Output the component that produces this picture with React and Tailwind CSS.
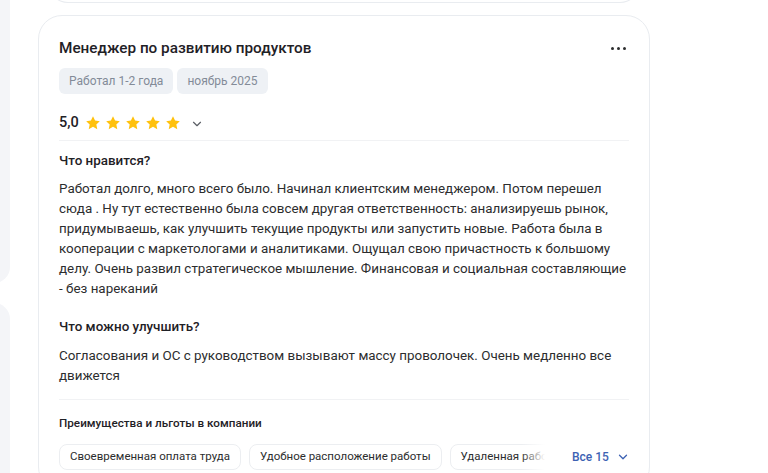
import { ChevronDown } from "lucide-react";

const font = { fontFamily: "Roboto, 'Noto Sans', sans-serif" };

function Star() {
  return (
    <svg width="16" height="16" viewBox="0 0 24 24" className="shrink-0">
      <path
        d="M12 1.8l3.1 6.6 7.1.9-5.2 4.9 1.4 7.1L12 17.8l-6.4 3.5 1.4-7.1-5.2-4.9 7.1-.9z"
        fill="#ffc10d"
      />
    </svg>
  );
}

const perks = ["Своевременная оплата труда", "Удобное расположение работы", "Удаленная работа"];

export default function App() {
  return (
    <div className="w-[768px] h-[473px] overflow-hidden bg-white flex items-start" style={font}>
      <div className="w-[10px] shrink-0 overflow-hidden flex flex-col gap-[20px]">
        <div className="shrink-0 w-[40px] -ml-[30px] h-[303px] -mt-[20px] rounded-2xl bg-[#f4f5f8]" />
        <div className="shrink-0 w-[40px] -ml-[30px] h-[300px] rounded-2xl bg-[#f4f5f8]" />
      </div>

      <div className="ml-[28px] w-[612px] shrink-0 flex flex-col">
        <div className="shrink-0 mx-[10px] h-[20px] -mt-[17px] rounded-b-[20px] border border-[#e9ecf0]" />

        <div className="shrink-0 mt-[12px] rounded-[24px] border border-[#e9ecf0] pt-[20px] pl-[20px] pr-[20px] text-[#2c2d2e]">
          <div className="flex items-center justify-between h-[24px]">
            <h2 className="text-[15.3px] font-medium text-[#1f2126]">Менеджер по развитию продуктов</h2>
            <div className="flex gap-[3px] mr-[3px]">
              <span className="w-[3px] h-[3px] rounded-full bg-[#2c2d2e]" />
              <span className="w-[3px] h-[3px] rounded-full bg-[#2c2d2e]" />
              <span className="w-[3px] h-[3px] rounded-full bg-[#2c2d2e]" />
            </div>
          </div>

          <div className="mt-[8px] flex gap-[4px]">
            <span className="h-[26px] px-[10px] flex items-center rounded-[6px] bg-[#eef1f5] text-[12px] text-[#838b98]">
              Работал 1-2 года
            </span>
            <span className="h-[26px] px-[10px] flex items-center rounded-[6px] bg-[#eef1f5] text-[12px] text-[#838b98]">
              ноябрь 2025
            </span>
          </div>

          <div className="mt-[16px] flex items-center h-[26px]">
            <span className="text-[14.5px] font-medium text-[#1f2126] mr-[6px]">5,0</span>
            <div className="flex gap-[4px]">
              <Star />
              <Star />
              <Star />
              <Star />
              <Star />
            </div>
            <ChevronDown size={14} strokeWidth={2} className="ml-[9px] mt-[1px] text-[#5b5f66]" />
          </div>

          <div className="mt-[4px] h-px bg-[#f1f2f4]" />

          <h3 className="mt-[10px] text-[13.4px] leading-[20px] font-medium text-[#1f2126]">Что нравится?</h3>
          <p className="mt-[8px] text-[13.4px] leading-[20px]">
            Работал долго, много всего было. Начинал клиентским менеджером. Потом перешел сюда . Ну тут естественно была
            совсем другая ответственность: анализируешь рынок, придумываешь, как улучшить текущие продукты или запустить
            новые. Работа была в кооперации с маркетологами и аналитиками. Ощущал свою причастность к большому делу.
            Очень развил стратегическое мышление. Финансовая и социальная составляющие - без нареканий
          </p>

          <h3 className="mt-[18px] text-[13.4px] leading-[20px] font-medium text-[#1f2126]">Что можно улучшить?</h3>
          <p className="mt-[9px] text-[13.4px] leading-[20px]">
            Согласования и ОС с руководством вызывают массу проволочек. Очень медленно все движется
          </p>

          <div className="mt-[13px] h-px bg-[#f1f2f4]" />

          <h4 className="mt-[13px] text-[11.7px] leading-[20px] font-medium text-[#1f2126]">
            Преимущества и льготы в компании
          </h4>

          <div className="mt-[11px] flex items-center">
            <div className="relative w-[486px] shrink-0 overflow-hidden">
              <div className="flex gap-[8px]">
                {perks.map((p) => (
                  <span
                    key={p}
                    className="shrink-0 h-[26px] px-[10px] flex items-center rounded-[8px] border border-[#eceef1] text-[11.5px] text-[#2c2d2e] whitespace-nowrap"
                  >
                    {p}
                  </span>
                ))}
              </div>
              <div className="absolute right-0 top-0 h-full w-[24px] bg-gradient-to-r from-transparent to-white" />
            </div>
            <button className="ml-[27px] flex items-center gap-[7px] text-[12px] font-medium text-[#3d62b3] whitespace-nowrap">
              Все 15
              <ChevronDown size={14} strokeWidth={2.2} />
            </button>
          </div>
          <div className="h-[20px]" />
        </div>
      </div>
    </div>
  );
}
